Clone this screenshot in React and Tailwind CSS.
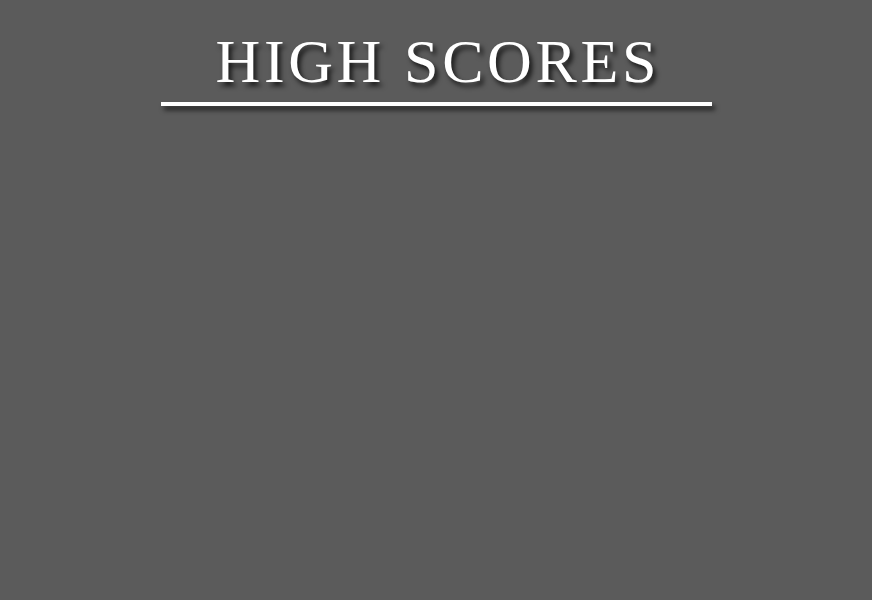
import React from 'react';

const App = () => {
    return (
        <div className="min-h-screen w-full bg-[#5b5b5b] flex flex-col items-center pt-[30px]">
            {/* Title */}
            <div className="w-[551px] flex flex-col items-center">
                <h1
                    className="text-[62px] leading-none tracking-[3.6px] pl-[3.6px] text-white [text-shadow:3px_4px_5px_rgba(0,0,0,0.75)]"
                    style={{ fontFamily: '"Liberation Serif", "DejaVu Serif", serif' }}
                >
                    HIGH SCORES
                </h1>
                <div className="mt-[10px] h-[4px] w-full bg-white shadow-[3px_4px_5px_rgba(0,0,0,0.7)]" />
            </div>
        </div>
    );
};

export default App;
